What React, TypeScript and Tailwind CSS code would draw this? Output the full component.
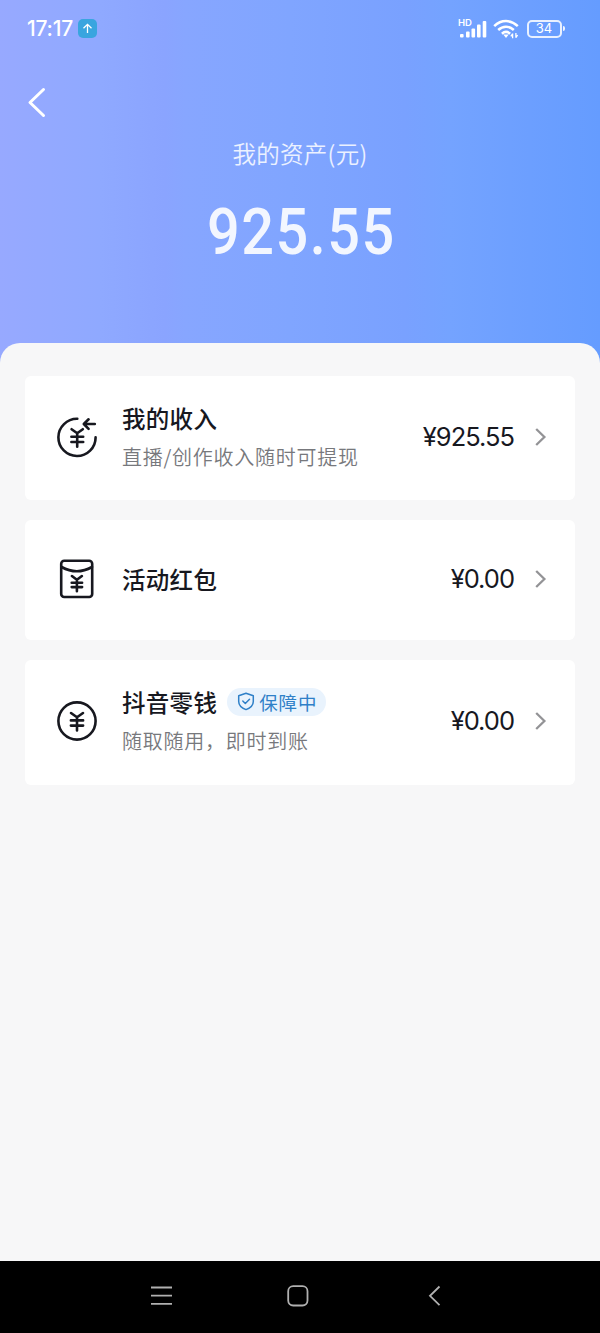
import type { ReactNode } from "react";

type Asset = {
  title: string;
  desc?: string;
  amount: string;
  badge?: string;
  icon: ReactNode;
  size: string;
};

const iconProps = {
  width: 44,
  height: 44,
  viewBox: "0 0 44 44",
  fill: "none",
  stroke: "#17181f",
  strokeWidth: 2.6,
  strokeLinecap: "round" as const,
  strokeLinejoin: "round" as const,
};

function IncomeIcon() {
  return (
    <svg {...iconProps}>
      <path d="M22.3 3.8A18.6 18.6 0 1 0 40.6 22.4" />
      <path d="M39.8 9H29M33.6 4.3l-4.8 4.7 4.8 4.8" />
      <path d="M16.6 14.2l5.6 4 5.6-4M22.2 18.2V31.8M16.4 21.7h11.8M16.4 27h11.8" />
    </svg>
  );
}

function RedPacketIcon() {
  return (
    <svg {...iconProps}>
      <rect x="6.2" y="3.8" width="31" height="36.2" rx="3" />
      <path d="M6.6 10c9.6 5.4 20.8 5.4 30.4 0" />
      <path d="M16.9 19l5 3.8 5-3.8M21.9 22.8v11.4M16.7 25.7h10.4M16.7 30.1h10.4" />
    </svg>
  );
}

function CoinIcon() {
  return (
    <svg {...iconProps}>
      <circle cx="22" cy="22" r="18.6" />
      <path d="M16 14l6 4.2 6-4.2M22 18.2v13.3M15.9 21.4h12.2M15.9 26.6h12.2" />
    </svg>
  );
}

const assets: Asset[] = [
  {
    title: "我的收入",
    desc: "直播/创作收入随时可提现",
    amount: "¥925.55",
    icon: <IncomeIcon />,
    size: "h-[124px] pb-[2px]",
  },
  {
    title: "活动红包",
    amount: "¥0.00",
    icon: <RedPacketIcon />,
    size: "h-[120px] pb-[2px]",
  },
  {
    title: "抖音零钱",
    desc: "随取随用，即时到账",
    amount: "¥0.00",
    badge: "保障中",
    icon: <CoinIcon />,
    size: "h-[125px] pb-[4px]",
  },
];

function StatusBar() {
  return (
    <div className="flex h-[57px] items-center justify-between pl-[27px] pr-[35px] text-white">
      <div className="flex items-center gap-[5px]">
        <span className="font-['Inter',sans-serif] text-[21px] font-medium leading-6 tracking-[-0.2px]">17:17</span>
        <span className="flex size-[19px] items-center justify-center rounded-[5px] bg-[#39a5df]">
          <svg width="11" height="11" viewBox="0 0 11 11" fill="none" stroke="white" strokeWidth="1.3">
            <path d="M5.5 10V1.5M1.5 5.3l4-4 4 4" />
          </svg>
        </span>
      </div>

      <div className="flex items-center">
        {/* signal */}
        <svg width="30" height="22" viewBox="0 0 30 22" fill="white">
          <text x="0" y="8.3" fontSize="9.5" fontWeight="600" fontFamily="Inter, sans-serif">
            HD
          </text>
          <rect x="2" y="16" width="3.6" height="3.5" rx="1" />
          <rect x="8" y="13.5" width="3.6" height="6" rx="1" />
          <rect x="13.5" y="10.5" width="3.6" height="9" rx="1" />
          <rect x="19" y="6.5" width="3.6" height="13" rx="1" />
          <rect x="24.7" y="3" width="3.6" height="16.5" rx="1" />
        </svg>
        {/* wifi */}
        <svg className="ml-[5px]" width="27" height="22" viewBox="0 0 27 22" fill="none" stroke="white" strokeWidth="2.5">
          <path d="M1.2 8.2c7-6.8 16.6-6.8 23.6 0" />
          <path d="M5.2 12c4.7-4.4 10.9-4.4 15.6 0" />
          <path d="M8.9 15.7c2.6-2.3 5.6-2.3 8.2 0" />
          <path d="M10.3 16.5h5.4L13 20z" fill="white" stroke="none" />
          <path d="M19.6 15.5v4.8M17.8 18.4l1.8-2.4M22.9 14.9v4.8M24.6 17l-1.7 2.6" strokeWidth="1.3" />
        </svg>
        {/* battery */}
        <div className="ml-[7px] flex items-center gap-[1.5px]">
          <div className="flex h-[18px] w-[35px] items-center justify-center rounded-[5px] border-2 border-white/85 font-['Inter',sans-serif] text-[13px] leading-none">
            34
          </div>
          <div className="h-[5px] w-[2px] rounded-r-sm bg-white/90" />
        </div>
      </div>
    </div>
  );
}

function AssetCard({ item }: { item: Asset }) {
  return (
    <div className={`flex items-center rounded-[6px] bg-white pl-[30px] pr-[27px] ${item.size}`}>
      {item.icon}
      <div className="ml-[23px] flex flex-1 flex-col pb-px">
        <div className="flex items-center">
          <h2 className="text-[23.5px] font-medium leading-[34px] tracking-[0.3px] text-[#17181f]">{item.title}</h2>
          {item.badge && (
            <span className="ml-[10px] flex h-[28px] items-center rounded-full bg-[#e9f3fd] pl-[10px] pr-[9px] text-[18.5px] leading-[28px] tracking-[0.9px] text-[#2f80c8]">
              <svg className="mr-[4px]" width="18" height="19" viewBox="0 0 18 19" fill="none" stroke="currentColor" strokeWidth="1.5" strokeLinecap="round" strokeLinejoin="round">
                <path d="M9 1.3l7.3 2.5v5.6c0 3.8-3 6.5-7.3 8.2-4.3-1.7-7.3-4.4-7.3-8.2V3.8z" />
                <path d="M5.8 9l2.500 2.500 4.200-4.200" />
              </svg>
              {item.badge}
            </span>
          )}
        </div>
        {item.desc && (
          <p className="mt-[7px] text-[20px] font-[350] leading-[30px] tracking-[0.75px] text-[#77787c]">{item.desc}</p>
        )}
      </div>
      <span className="font-['Inter',sans-serif] text-[25.5px] leading-[30px] tracking-[-1px] text-[#17181f]">{item.amount}</span>
      <svg className="ml-[20px]" width="14" height="20" viewBox="0 0 14 20" fill="none" stroke="#939396" strokeWidth="2.3">
        <path d="M2.2 2l8.2 8-8.2 8" />
      </svg>
    </div>
  );
}

export default function App() {
  return (
    <div className="flex h-[1333px] w-[600px] flex-col bg-black font-['Noto_Sans_CJK_SC',sans-serif]">
      <div className="flex flex-1 flex-col bg-[linear-gradient(90deg,#97a9ff_0px,#8fa9ff_100px,#8aa4ff_165px,#87a6ff_185px,#80a5ff_290px,#79a1ff_405px,#74a3ff_450px,#6c9fff_530px,#659cff_600px)]">
        <header className="flex h-[343px] flex-col">
          <StatusBar />
          <button className="ml-[26px] mt-[29px] h-[34px] w-[22px]">
            <svg width="22" height="34" viewBox="0 0 22 34" fill="none" stroke="white" strokeWidth="3" strokeLinecap="round" strokeLinejoin="round">
              <path d="M17.5 3.5L4 16.5l13.5 13" />
            </svg>
          </button>
          <p className="mt-[16px] text-center text-[23.5px] font-[350] leading-[34px] tracking-[0.3px] text-white/85">我的资产(元)</p>
          <p className="mt-[31px] scale-x-90 pl-[3px] text-center font-['Roboto',sans-serif] text-[64px] font-medium leading-[64px] tracking-[1.7px] text-white/90">
            925.55
          </p>
        </header>

        <main className="flex flex-1 flex-col gap-[20px] rounded-t-[20px] bg-[#f7f7f8] px-[25px] pt-[33px]">
          {assets.map((item) => (
            <AssetCard key={item.title} item={item} />
          ))}
        </main>
      </div>

      <nav className="flex h-[72px] items-center pb-[3px] pl-[150px]">
        <svg width="23" height="22" viewBox="0 0 23 22" stroke="#b0b0b0" strokeWidth="1.8">
          <path d="M1 2.5h21M1 10.7h21M1 18.9h21" />
        </svg>
        <svg className="ml-[114px]" width="22" height="22" viewBox="0 0 22 22" fill="none" stroke="#b0b0b0" strokeWidth="1.8">
          <rect x="1.2" y="1.2" width="19.3" height="19.3" rx="5" />
        </svg>
        <svg className="ml-[119px]" width="13" height="22" viewBox="0 0 13 22" fill="none" stroke="#b0b0b0" strokeWidth="1.8">
          <path d="M11.5 1.5L2 10.8l9.5 9.3" />
        </svg>
      </nav>
    </div>
  );
}
